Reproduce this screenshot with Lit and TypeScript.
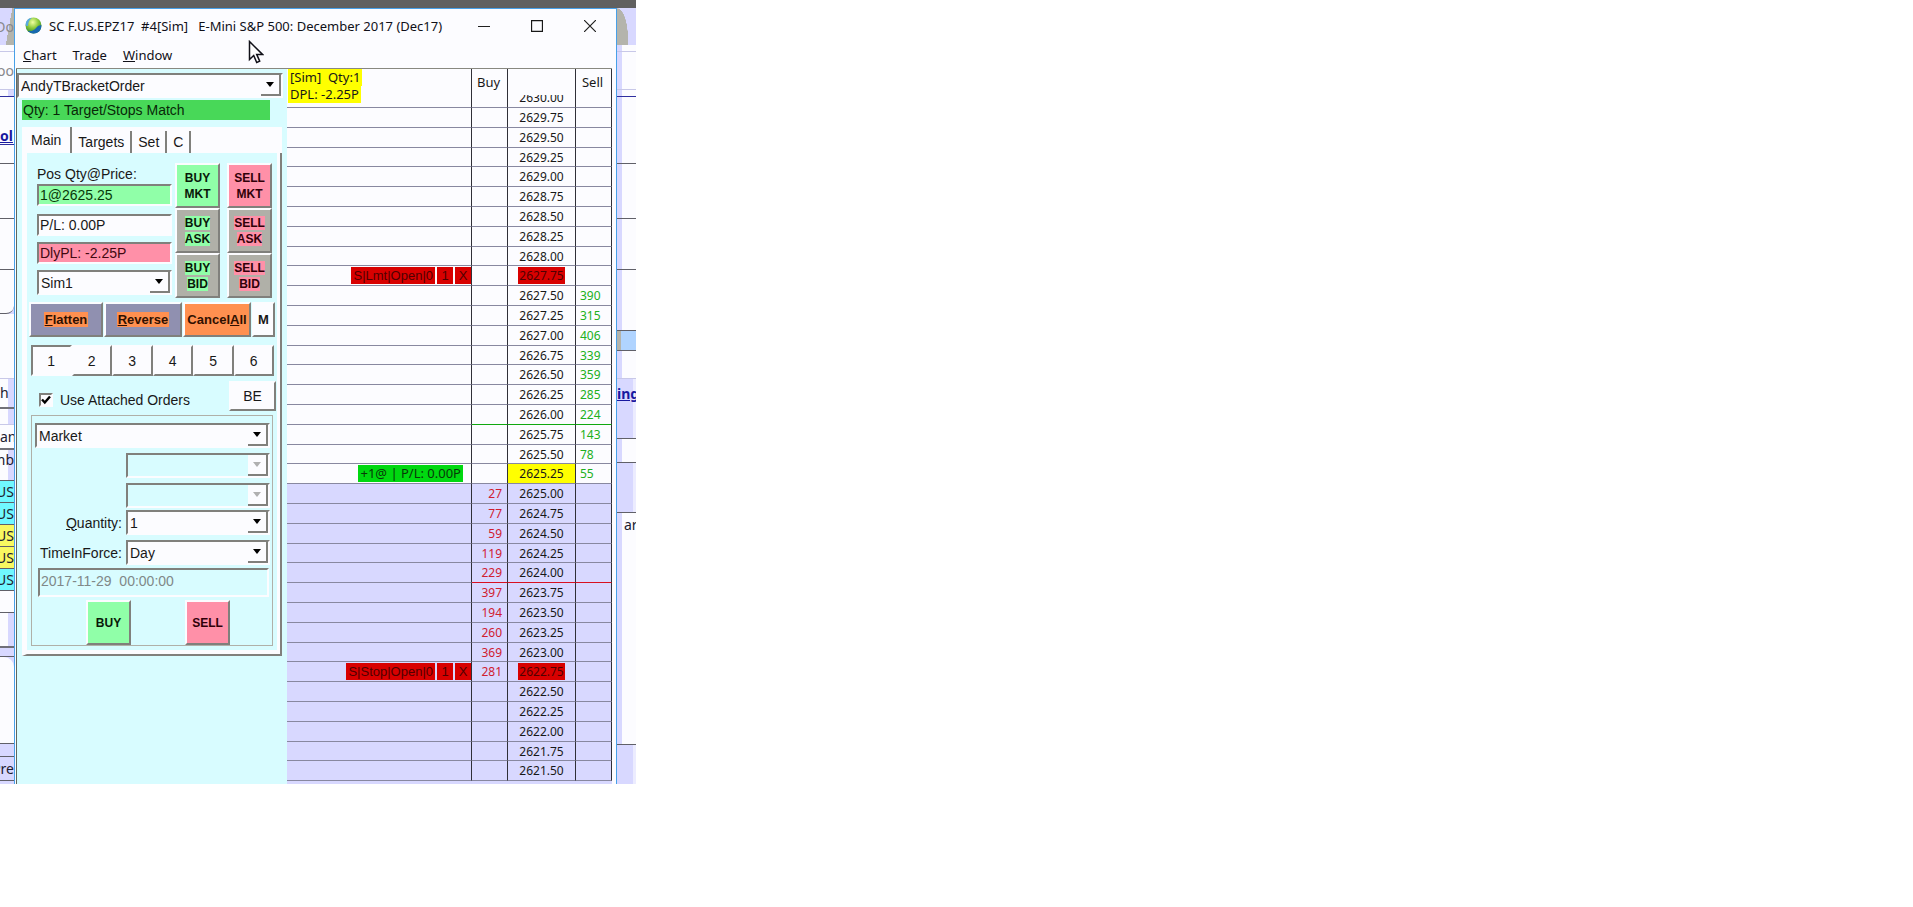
import { LitElement, html, css, nothing } from "lit";
import { customElement, property, state } from "lit/decorators.js";
import { classMap } from "lit/directives/class-map.js";

interface BackRow {
  h: number;
  cls: string;
  text?: string;
  link?: boolean;
}

/* Slivers of the chart windows that lie behind, left edge. */
const LEFT_ROWS: BackRow[] = [
  { h: 37, cls: "lav ear faded tail", text: "Do" },
  { h: 7, cls: "line-soft" },
  { h: 38, cls: "line-soft faded tail", text: "oo" },
  { h: 7, cls: "line-navy notch" },
  { h: 48, cls: "line-navy low", text: "ol", link: true },
  { h: 19, cls: "line" },
  { h: 55, cls: "line" },
  { h: 51, cls: "line" },
  { h: 44, cls: "line corner" },
  { h: 65, cls: "line-soft" },
  { h: 30, cls: "line-thick notch", text: "h" },
  { h: 16, cls: "line-soft notch" },
  { h: 25, cls: "line-thick", text: "an" },
  { h: 31, cls: "line notch top tail", text: "mb" },
  { h: 22, cls: "line cyan tail", text: "US" },
  { h: 22, cls: "line cyan tail", text: "US" },
  { h: 22, cls: "line yel tail", text: "US" },
  { h: 22, cls: "line yel tail", text: "US" },
  { h: 22, cls: "line cyan tail", text: "US" },
  { h: 22, cls: "line" },
  { h: 35, cls: "line-thick notch" },
  { h: 9, cls: "line lav" },
  { h: 87, cls: "line round" },
  { h: 13, cls: "line lav" },
  { h: 24, cls: "line lav tail", text: "Pre" },
];

/* The same windows showing past the right edge. */
const RIGHT_ROWS: BackRow[] = [
  { h: 37, cls: "lav ear" },
  { h: 7, cls: "line-soft edge" },
  { h: 38, cls: "line-soft edge" },
  { h: 7, cls: "line-navy edge" },
  { h: 67, cls: "line edge" },
  { h: 55, cls: "line edge" },
  { h: 51, cls: "line edge" },
  { h: 61, cls: "line edge" },
  { h: 20, cls: "line sky" },
  { h: 28, cls: "line-soft edge" },
  { h: 60, cls: "line lav shade high", text: "ing", link: true },
  { h: 24, cls: "line edge" },
  { h: 50, cls: "line lav shade" },
  { h: 232, cls: "line edge high indent", text: "ar" },
  { h: 39, cls: "lav shade" },
];

const SELL_SIZE: Record<string, number> = {
  "2627.50": 390, "2627.25": 315, "2627.00": 406, "2626.75": 339, "2626.50": 359,
  "2626.25": 285, "2626.00": 224, "2625.75": 143, "2625.50": 78, "2625.25": 55,
};
const BUY_SIZE: Record<string, number> = {
  "2625.00": 27, "2624.75": 77, "2624.50": 59, "2624.25": 119, "2624.00": 229,
  "2623.75": 397, "2623.50": 194, "2623.25": 260, "2623.00": 369, "2622.75": 281,
};
const ORDERS: Record<string, string> = {
  "2627.75": "S|Lmt|Open|0",
  "2622.75": "S|Stop|Open|0",
};
const LAST = "2625.25";
const TOP_PRICE = 2629.75;
const ROWS = 34;

@customElement("back-strip")
export class BackStrip extends LitElement {
  @property({ attribute: false }) rows: BackRow[] = [];

  static styles = css`
    :host { display: flex; flex-direction: column; overflow: hidden; background: #d8d8ff; font: 14px/16px "Noto Sans", sans-serif; color: #202030; }
    .row { box-sizing: border-box; flex: none; display: flex; align-items: center; overflow: hidden; background: #fcfcff; white-space: nowrap; }
    .row.line { border-bottom: 1px solid #606068; }
    .row.line-soft { border-bottom: 1px solid #c8c8e8; }
    .row.line-navy { border-bottom: 1px solid #3030a0; }
    .row.line-thick { border-bottom: 2px solid #707078; }
    .row.lav { background: #d8d8ff; }
    .row.cyan { background: #70f8ff; }
    .row.yel { background: #f8f860; }
    .row.ear { background: linear-gradient(100deg, #d8d8ff 60%, #b4b4ac 60%); }
    :host(.right) .row.ear { background: #d8d8ff radial-gradient(ellipse 11px 30px at 0 30px, #b4b4ac 98%, transparent 100%) no-repeat; }
    .row.faded { color: #88888c; }
    .row.notch { background: linear-gradient(90deg, #fcfcff 8px, #d8d8ff 8px); }
    .row.edge { background: linear-gradient(90deg, #d8d8ff 5px, #fcfcff 5px); }
    .row.shade { background: linear-gradient(90deg, #d8d8ff 16px, #ececff 16px); }
    .row.sky { background: linear-gradient(90deg, #b4b4ac 4px, #b0d4ff 4px); }
    .row.corner { border-bottom-right-radius: 8px; }
    .row.round { border-top-right-radius: 10px; }
    .row.low { align-items: flex-end; }
    .row.top { align-items: flex-start; padding-top: 2px; }
    .row.tail { justify-content: flex-end; }
    .row.high { align-items: flex-start; padding-top: 7px; }
    .row.indent { padding: 4px 0 0 7px; }
    a { color: #1818a0; font-weight: 700; }
  `;

  render() {
    return this.rows.map(
      (r) => html`<div class="row ${r.cls}" style="height:${r.h}px">
        ${r.link ? html`<a href="#">${r.text}</a>` : r.text ?? nothing}
      </div>`
    );
  }
}

@customElement("combo-box")
export class ComboBox extends LitElement {
  @property() value = "";
  @property() label = "";
  @property({ type: Boolean }) disabled = false;

  static styles = css`
    :host { display: block; }
    .box { display: grid; grid-template-columns: 1fr 20px; box-sizing: border-box; height: 25px; border: 2px solid; border-color: #80807c #fcfcff #fcfcff #80807c; background: #fcfcff; }
    .off { background: #d8fcff; }
    select { grid-area: 1 / 1 / 2 / 3; appearance: none; min-width: 0; margin: 0; padding: 1px 20px 0 2px; border: 0; outline: 0; background: transparent; color: #181818; font: 14px/20px "Liberation Sans", sans-serif; opacity: 1; }
    .drop { grid-area: 1 / 2; pointer-events: none; display: grid; place-items: center; background: #fcfcff; border: solid #80807c; border-width: 0 2px 2px 0; }
  `;

  render() {
    return html`<div class=${classMap({ box: true, off: this.disabled })}>
      <select aria-label=${this.label} ?disabled=${this.disabled}><option>${this.value}</option></select>
      <span class="drop"><svg width="8" height="5" viewBox="0 0 8 5"><path d="M0 0h8L4 5z" fill=${this.disabled ? "#b0b0b0" : "#000"} /></svg></span>
    </div>`;
  }
}

@customElement("trade-panel")
export class TradePanel extends LitElement {
  @state() private config = 1;

  static styles = css`
    :host { display: block; box-sizing: border-box; border-left: 1px solid #606860; background: #d8fcff; font: 14px/16px "Liberation Sans", sans-serif; color: #181818; }
    button, input { box-sizing: border-box; margin: 0; font: inherit; color: inherit; }
    .strategy { padding-top: 4px; margin-right: 4px; }
    .status { width: 248px; margin: 2px 0 7px 5px; padding-left: 1px; background: #48d858; line-height: 20px; color: #082808; box-sizing: border-box; }
    .tabs { display: flex; align-items: flex-end; height: 26px; margin: 0 5px 0 5px; background: #fcfcff; }
    .tab { height: 22px; padding: 0 6px; border: 0; border-right: 2px solid #80807c; background: none; }
    .tab.on { height: 26px; padding: 0 9px; }
    .body { margin: 0 5px 0 5px; padding: 10px 2px 8px 2px; border: solid; border-color: transparent #80807c #80807c #fcfcff; border-width: 0 2px 2px 5px; box-shadow: inset -3px -4px 0 #fcfcff; }
    .top { display: grid; grid-template-columns: 138px 52px 45px; margin-left: 8px; }
    .info { display: flex; flex-direction: column; width: 135px; padding-top: 3px; }
    .field { width: 100%; height: 22px; padding: 0 1px; border: 2px solid; border-color: #80807c #fcfcff #fcfcff #80807c; background: #fcfcff; outline: 0; }
    .info label { margin-bottom: 2px; }
    .pos { background: #90ffa8; color: #083808; margin-bottom: 8px; }
    .daily { background: #ff90a8; color: #400810; margin: 6px 0 6px; }
    .sides { display: grid; align-content: start; }
    .raised { border: 2px solid; border-color: #fcfcff #80807c #80807c #fcfcff; padding: 0; background: #fcfcff; }
    .order { width: 45px; height: 45px; font-weight: 700; font-size: 12px; line-height: 16px; }
    .grey { background: #b0b0a8; }
    .buy { background: #90ffa8; color: #081808; }
    .sell { background: #ff90a8; color: #300008; }
    .acts { display: grid; grid-template-columns: 74px 78px 68px 23px; gap: 1px; margin-top: 4px; font-weight: 700; font-size: 13px; }
    .acts .raised { height: 35px; white-space: nowrap; }
    .slate { background: #9090b0; }
    .orange { background: #ff9050; color: #301000; }
    .tag { padding: 0 1px; }
    .configs { display: grid; grid-template-columns: repeat(6, 1fr); width: 243px; margin: 8px 0 0 2px; }
    .num { height: 31px; border: 2px solid; border-color: #fcfcff #80807c #80807c #fcfcff; background: #fcfcff; padding: 0; }
    .num.on { border-color: #80807c #fcfcff #fcfcff #80807c; }
    .attach { display: flex; justify-content: space-between; align-items: flex-start; width: 237px; margin: 5px 0 4px 10px; }
    .attach label { display: flex; align-items: center; gap: 7px; padding-top: 11px; }
    .attach input { appearance: none; width: 14px; height: 14px; border: 2px solid; border-color: #80807c #fcfcff #fcfcff #80807c; background: #fcfcff; }
    .tick { display: grid; }
    .tick > * { grid-area: 1 / 1; }
    .tick svg { place-self: center; pointer-events: none; }
    .be { width: 47px; height: 30px; }
    .group { box-sizing: border-box; width: 242px; margin-left: 2px; border: 1px solid #b0b0a8; padding: 7px 2px 0 3px; }
    .form { display: grid; grid-template-columns: 87px 1fr; column-gap: 4px; row-gap: 5px; align-items: center; margin-top: 5px; }
    .form.live { margin-top: 2px; }
    .form label { text-align: right; white-space: nowrap; }
    .wide { grid-column: 2; }
    .date { display: block; height: 29px; margin: 3px 0 3px 3px; padding: 0 1px 4px; width: 231px; background: #d8fcff; color: #808888; }
    .send { display: flex; gap: 54px; margin-left: 51px; }
  `;

  private order(side: string, kind: string, grey: boolean) {
    const tone = side === "BUY" ? "buy" : "sell";
    return html`<button class="raised order ${grey ? "grey" : tone}"><span class=${tone}>${side}<br />${kind}</span></button>`;
  }

  render() {
    return html`
      <combo-box class="strategy" label="Strategy" value="AndyTBracketOrder"></combo-box>
      <div class="status">Qty: 1 Target/Stops Match</div>
      <div class="tabs" role="tablist">
        <button class="tab on" role="tab">Main</button>
        <button class="tab" role="tab">Targets</button>
        <button class="tab" role="tab">Set</button>
        <button class="tab" role="tab">C</button>
      </div>
      <div class="body">
        <div class="top">
          <div class="info">
            <label for="pos">Pos Qty@Price:</label>
            <input id="pos" class="field pos" readonly .value=${"1@2625.25"} />
            <input class="field" aria-label="Profit and loss" readonly .value=${"P/L: 0.00P"} />
            <input class="field daily" aria-label="Daily profit and loss" readonly .value=${"DlyPL: -2.25P"} />
            <combo-box label="Account" value="Sim1"></combo-box>
          </div>
          <div class="sides">${this.order("BUY", "MKT", false)}${this.order("BUY", "ASK", true)}${this.order("BUY", "BID", true)}</div>
          <div class="sides">${this.order("SELL", "MKT", false)}${this.order("SELL", "ASK", true)}${this.order("SELL", "BID", true)}</div>
        </div>
        <div class="acts">
          <button class="raised slate"><span class="tag orange"><u>F</u>latten</span></button>
          <button class="raised slate"><span class="tag orange"><u>R</u>everse</span></button>
          <button class="raised orange">Cancel<u>A</u>ll</button>
          <button class="raised">M</button>
        </div>
        <div class="configs">
          ${[1, 2, 3, 4, 5, 6].map(
            (n) => html`<button class=${classMap({ num: true, on: this.config === n })} @click=${() => (this.config = n)}>${n}</button>`
          )}
        </div>
        <div class="attach">
          <label><span class="tick"><input type="checkbox" checked /><svg width="10" height="10" viewBox="0 0 10 10"><path d="M1 4.5 3.8 7.5 9 1.5" fill="none" stroke="#000" stroke-width="2.4" /></svg></span>Use Attached Orders</label>
          <button class="raised be">BE</button>
        </div>
        <div class="group">
          <combo-box label="Order type" value="Market"></combo-box>
          <div class="form">
            <combo-box class="wide" label="Price 1" disabled></combo-box>
            <combo-box class="wide" label="Price 2" disabled></combo-box>
          </div>
          <div class="form live">
            <label><u>Q</u>uantity:</label><combo-box label="Quantity" value="1"></combo-box>
            <label>TimeInForce:</label><combo-box label="TimeInForce" value="Day"></combo-box>
          </div>
          <input class="field date" aria-label="Good till" disabled .value=${"2017-11-29  00:00:00"} />
          <div class="send">
            <button class="raised order buy">BUY</button>
            <button class="raised order sell">SELL</button>
          </div>
        </div>
      </div>
    `;
  }
}

@customElement("price-ladder")
export class PriceLadder extends LitElement {
  static styles = css`
    :host { display: block; font: 12px/17px "Noto Sans", sans-serif; color: #181818; }
    table { width: 100%; table-layout: fixed; border-collapse: separate; border-spacing: 0; }
    .c-buy, .c-sell { width: 36px; }
    .c-price { width: 68px; }
    th, td { box-sizing: border-box; padding: 0; border-right: 1px solid #303038; border-bottom: 1px solid #8888a0; white-space: nowrap; overflow: hidden; }
    th { height: 39px; font-weight: 400; vertical-align: top; }
    .head { padding-right: 2px; line-height: 26px; font-size: 13px; }
    .account { text-align: left; font-size: 13px; }
    .account span { display: block; width: fit-content; margin-left: 1px; padding: 0 2px; background: #ffff00; white-space: pre; }
    .cut { display: flex; align-items: flex-end; justify-content: center; overflow: hidden; height: 12px; margin-top: 26px; line-height: 19px; }
    td { height: 20px; }
    tbody tr:nth-child(5n + 3) td { height: 19px; }
    .bid { background: #d8d8ff; }
    .price { text-align: center; }
    .last { background: #ffff00; }
    .hit { background: #d80000; color: #500000; padding: 0 1px; }
    .bids { text-align: right; padding-right: 5px; color: #d02030; }
    .asks { padding-left: 4px; color: #20b020; }
    .high td + td { border-bottom-color: #10a810; }
    .low td + td { border-bottom-color: #d81020; }
    .tags { display: flex; justify-content: flex-end; gap: 2px; }
    .tags button { margin: 0; border: 0; padding: 0 2px; min-width: 16px; background: #d80000; color: #500000; font: 13px/17px "Liberation Sans", sans-serif; }
    .fill { margin-right: 8px; padding: 0 2px; background: #00d810; color: #083808; font-size: 13px; }
  `;

  private marks(price: string) {
    if (ORDERS[price]) return html`<div class="tags"><button>${ORDERS[price]}</button><button>1</button><button aria-label="Cancel order">X</button></div>`;
    if (price === LAST) return html`<div class="tags"><span class="fill">+1@ | P/L: 0.00P</span></div>`;
    return nothing;
  }

  render() {
    const prices = Array.from({ length: ROWS }, (_, i) => (TOP_PRICE - i * 0.25).toFixed(2));
    return html`<table>
      <colgroup><col /><col class="c-buy" /><col class="c-price" /><col class="c-sell" /></colgroup>
      <thead>
        <tr>
          <th class="account"><span>[Sim]  Qty:1</span><span>DPL: -2.25P</span></th>
          <th class="head">Buy</th>
          <th><div class="cut">2630.00</div></th>
          <th class="head">Sell</th>
        </tr>
      </thead>
      <tbody>
        ${prices.map(
          (p) => html`<tr class=${classMap({ bid: Number(p) < Number(LAST), high: p === "2626.00", low: p === "2624.00" })}>
            <td>${this.marks(p)}</td>
            <td class="bids">${BUY_SIZE[p] ?? nothing}</td>
            <td class=${classMap({ price: true, last: p === LAST })}><span class=${classMap({ hit: p in ORDERS })}>${p}</span></td>
            <td class="asks">${SELL_SIZE[p] ?? nothing}</td>
          </tr>`
        )}
      </tbody>
    </table>`;
  }
}

@customElement("app-root")
export class AppRoot extends LitElement {
  static styles = css`
    :host { display: block; min-height: 100vh; background: #fff; }
    .screen { width: min(636px, 100%); background: #606060; padding-top: 8px; }
    .stage { display: grid; grid-template-columns: 14px 1fr 19px; max-height: 776px; overflow: hidden; }
    back-strip { min-height: 0; }
    .window { display: flex; flex-direction: column; border: solid #48a0e8; border-width: 1px 1px 0 1px; background: #fcfcff; font: 13px/16px "Noto Sans", sans-serif; color: #101018; }
    .title { display: flex; align-items: center; height: 33px; padding-left: 10px; }
    .caption { flex: 1; margin-left: 7px; white-space: pre; }
    .sys { width: 53px; height: 32px; padding: 0; border: 0; background: none; display: grid; place-items: center; }
    .menu { display: flex; gap: 16px; height: 26px; padding-left: 8px; align-items: center; }
    .menu button { padding: 0; border: 0; background: none; font: inherit; color: inherit; }
    .main { display: grid; grid-template-columns: 271px 1fr; flex: 1; margin: 0 4px 0 1px; border-top: 1px solid #888880; background: linear-gradient(90deg, transparent 271px, #d8d8ff 271px); }
    price-ladder { background: #fcfcff; align-self: start; }
    .pointer { position: absolute; left: 248px; top: 40px; }
  `;

  render() {
    return html`
      <div class="screen">
        <div class="stage">
          <back-strip .rows=${LEFT_ROWS}></back-strip>
          <div class="window">
            <div class="title">
              <svg width="17" height="17" viewBox="0 0 17 17">
                <defs>
                  <radialGradient id="g" cx=".45" cy=".3" r=".75"><stop offset="0" stop-color="#f0ffa0" /><stop offset=".5" stop-color="#88c838" /><stop offset="1" stop-color="#207838" /></radialGradient>
                </defs>
                <circle cx="8.5" cy="8.5" r="8" fill="url(#g)" />
                <path d="M.6 7.5C1 3 4 .8 7 .7 4.5 2.5 3.2 5 3 9 1.5 9 .7 8.5.6 7.5z" fill="#58a8e0" />
                <path d="M3 14c3.5.5 6-.5 8.5-3.5C13 8.7 15 8 16.4 8.5c0 5-3.4 8-7.9 8-2.2 0-4-.9-5.5-2.5z" fill="#1868b0" />
              </svg>
              <span class="caption">SC F.US.EPZ17  #4[Sim]   E-Mini S&amp;P 500: December 2017 (Dec17)</span>
              <button class="sys" aria-label="Minimize"><svg width="12" height="12"><path d="M0 6.5h12" stroke="#202020" /></svg></button>
              <button class="sys" aria-label="Maximize"><svg width="12" height="12"><path d="M.5.5h11v11H.5z" fill="none" stroke="#181818" stroke-width="1.3" /></svg></button>
              <button class="sys" aria-label="Close"><svg width="12" height="12"><path d="M0 0l12 12M12 0L0 12" stroke="#202020" stroke-width="1.2" /></svg></button>
            </div>
            <div class="menu">
              <button><u>C</u>hart</button><button>Tra<u>d</u>e</button><button><u>W</u>indow</button>
            </div>
            <div class="main">
              <trade-panel></trade-panel>
              <price-ladder></price-ladder>
            </div>
          </div>
          <back-strip class="right" .rows=${RIGHT_ROWS}></back-strip>
        </div>
        <svg class="pointer" width="16" height="24" viewBox="0 0 16 24"><path d="M1.5 1.5v18l4.2-4 3 7 3-1.3-3-6.8h5.8z" fill="#fff" stroke="#101018" stroke-width="1.5" /></svg>
      </div>
    `;
  }
}
